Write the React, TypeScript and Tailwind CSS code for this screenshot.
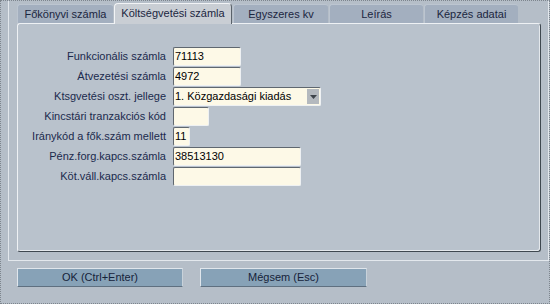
import React from "react";

const font = { fontFamily: '"Liberation Sans", Arial, sans-serif' };

function Input({ w, value }: { w: string; value?: string }) {
  return (
    <div
      className={`${w} h-[19px] bg-[#fdf9e7] border border-t-[#5f676f] border-l-[#5f676f] border-r-[#eef1f3] border-b-[#eef1f3] rounded-[2px] flex items-center pl-[1px] text-[11px] text-black leading-none`}
    >
      {value}
    </div>
  );
}

function Select({ value }: { value: string }) {
  return (
    <div className="w-[148px] h-[19px] bg-[#fdf9e7] border border-t-[#5f676f] border-l-[#5f676f] border-r-[#eef1f3] border-b-[#eef1f3] rounded-[2px] flex items-center text-[11px] text-black leading-none">
      <span className="flex-1 pl-[1px]">{value}</span>
      <span className="w-[12px] h-[15px] mr-[1px] bg-[#b4b9be] flex items-center justify-center">
        <svg width="7" height="4" viewBox="0 0 7 4">
          <path d="M0 0 L7 0 L3.5 4 Z" fill="#3e444a" />
        </svg>
      </span>
    </div>
  );
}

const rows: { label: string; el: React.ReactNode }[] = [
  { label: "Funkcionális számla", el: <Input w="w-[68px]" value="71113" /> },
  { label: "Átvezetési számla", el: <Input w="w-[68px]" value="4972" /> },
  { label: "Ktsgvetési oszt. jellege", el: <Select value="1. Közgazdasági kiadás" /> },
  { label: "Kincstári tranzakciós kód", el: <Input w="w-[36px]" /> },
  { label: "Iránykód a fők.szám mellett", el: <Input w="w-[17px]" value="11" /> },
  { label: "Pénz.forg.kapcs.számla", el: <Input w="w-[128px]" value="38513130" /> },
  { label: "Köt.váll.kapcs.számla", el: <Input w="w-[128px]" /> },
];

function Tab({ w, label, active }: { w: string; label: string; active?: boolean }) {
  if (active) {
    return (
      <div
        className={`${w} h-[21px] -mb-[1px] relative z-10 bg-[#c9ced4] border border-b-0 border-t-[#f2f4f6] border-l-[#f2f4f6] border-r-[#5a626a] rounded-t-[4px] flex items-center justify-center text-[11px] text-[#1b2640] leading-none pb-[1px]`}
      >
        {label}
      </div>
    );
  }
  return (
    <div
      className={`${w} h-[19px] bg-[#a3afbf] border-t border-l border-t-[#bcc5d0] border-l-[#bcc5d0] rounded-t-[3px] flex items-center justify-center text-[11px] text-[#1b2640] leading-none`}
    >
      {label}
    </div>
  );
}

export default function App() {
  return (
    <div
      style={font}
      className="w-[550px] h-[304px] bg-[#b5bec8] border border-dotted border-[#7d858d] overflow-hidden"
    >
      <div className="ml-[7px] w-[541px] h-[260px] border-l border-r border-b border-[#e3e8ed] pl-[8px] pt-[2px] flex flex-col">
        <div className="flex items-end gap-px h-[20px]">
          <Tab w="w-[96px]" label="Főkönyvi számla" />
          <Tab w="w-[118px]" label="Költségvetési számla" active />
          <Tab w="w-[95px]" label="Egyszeres kv" />
          <Tab w="w-[94px]" label="Leírás" />
          <Tab w="w-[94px]" label="Képzés adatai" />
        </div>
        <div className="w-[524px] h-[229px] bg-[#b9c2cc] border border-t-[#eef1f4] border-l-[#eef1f4] border-r-[#3f4850] border-b-[#3f4850] rounded-[3px] shadow-[inset_-1px_-1px_0_#e4e8ec] pt-[23px]">
          <div className="grid grid-cols-[148px_1fr] gap-x-[7px] gap-y-px">
            {rows.map((r) => (
              <React.Fragment key={r.label}>
                <div className="h-[19px] flex items-center justify-end text-[11px] text-[#1b2a4c] leading-none whitespace-nowrap">
                  {r.label}
                </div>
                <div className="h-[19px] flex items-center">{r.el}</div>
              </React.Fragment>
            ))}
          </div>
        </div>
      </div>
      <div className="mt-[7px] pl-[16px] flex gap-[17px]">
        <button className="w-[166px] h-[19px] bg-[#87a2b7] border border-t-[#e0e6ec] border-l-[#e0e6ec] border-r-[#c8d2da] border-b-[#5f7080] text-[11px] text-[#16223a] leading-none flex items-center justify-center">
          OK (Ctrl+Enter)
        </button>
        <button className="w-[167px] h-[19px] bg-[#87a2b7] border border-t-[#e0e6ec] border-l-[#e0e6ec] border-r-[#c8d2da] border-b-[#5f7080] text-[11px] text-[#16223a] leading-none flex items-center justify-center">
          Mégsem (Esc)
        </button>
      </div>
    </div>
  );
}
